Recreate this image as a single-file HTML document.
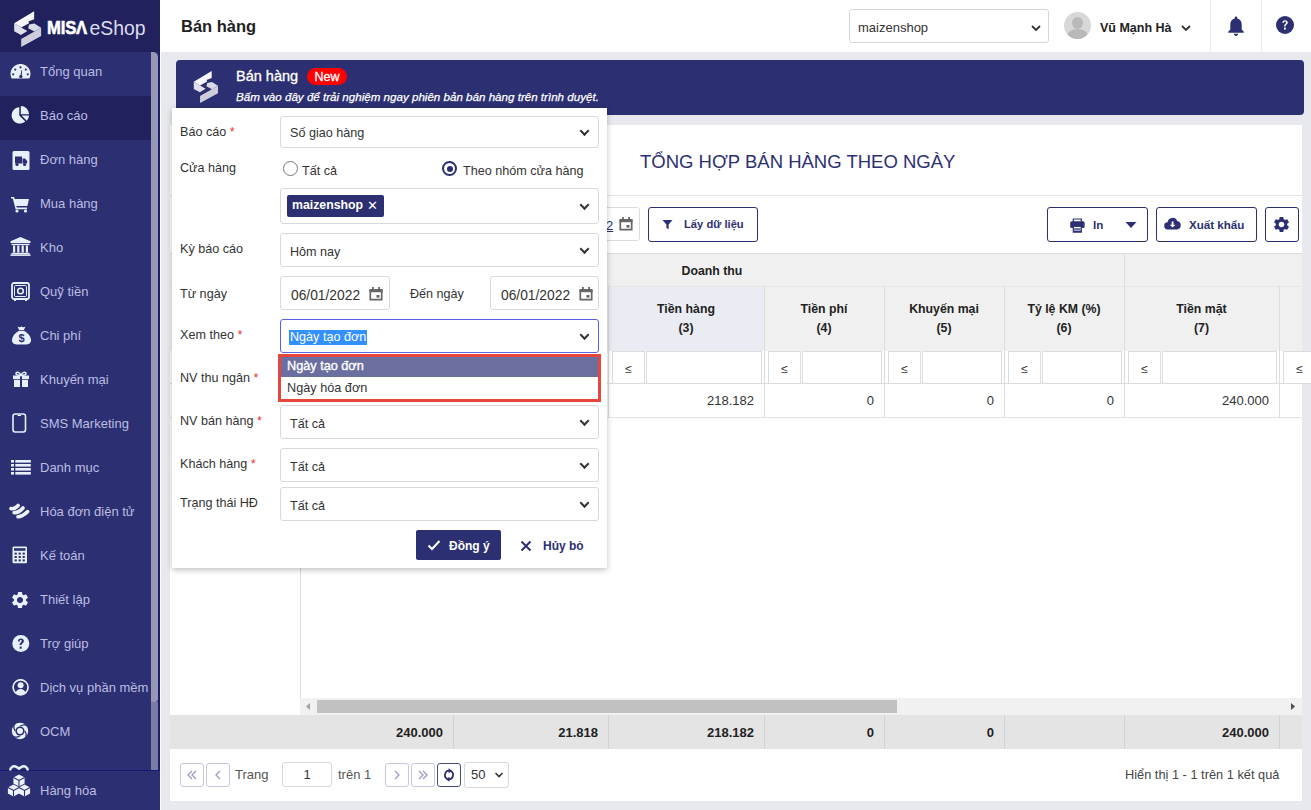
<!DOCTYPE html>
<html><head><meta charset="utf-8">
<style>
*{box-sizing:border-box;margin:0;padding:0}
html,body{width:1311px;height:810px;overflow:hidden;background:#fff;font-family:"Liberation Sans",sans-serif;color:#333}
.abs{position:absolute}
#side{position:absolute;left:0;top:0;width:160px;height:810px;background:#2c2f72}
#logo{position:absolute;left:0;top:0;width:160px;height:52px;background:#20215d}
.mi{position:absolute;left:0;width:151px;height:44px;color:#bbbee2;font-size:13px;line-height:39px;padding-left:40px;white-space:nowrap}
.mi.act{background:#20215d}
.mi svg{position:absolute;left:10px;top:12px;width:20px;height:20px}
#sbar{position:absolute;left:151px;top:52px;width:7px;height:650px;background:#9797b6;border-radius:0 5px 3px 0}
#sbar2{position:absolute;left:151px;top:702px;width:7px;height:68px;background:#7b7ca6}
#strack{position:absolute;left:158px;top:52px;width:2px;height:718px;background:#1d1e6c}
#bottomitem{position:absolute;left:0;top:770px;width:160px;height:40px;background:#2c2f72;border-top:1px solid #1a1670}
#main{position:absolute;left:161px;top:52px;width:1150px;height:758px;background:#e8e9ee;border-top-left-radius:2px}
#hdr-title{position:absolute;left:181px;top:16.5px;font-size:16.5px;font-weight:bold;color:#1f1f1f}
.btn{border:1px solid #2c2f72;border-radius:3px;background:#fff}
.btxt{margin-top:1px;font-size:11.6px;font-weight:bold;color:#2c2f72}
.th{font-size:12.3px;font-weight:bold;color:#222;text-align:center;line-height:19px}
.vl{width:1px;background:#dddddd}
.vl2{top:715px;width:1px;height:34px;background:#d2d2d2}
.td{top:393px;font-size:13px;color:#333;text-align:right}
.tf{top:725px;font-size:13px;font-weight:bold;color:#222;text-align:right}
.pb{top:763px;width:24px;height:24px;border:1px solid #c8c9e0;border-radius:3px}
.pb svg{position:absolute;left:0;top:0}
.fle{top:351px;width:33px;height:33px;border:1px solid #dcdcdc;font-size:12px;text-align:center;line-height:34px;color:#333;background:#fff}
.fin{top:351px;height:33px;border:1px solid #dcdcdc;background:#fff}
.lbl{margin-top:1px;font-size:12.6px;color:#333;white-space:nowrap}
.req{color:#e53935}
.sel{width:319px;border:1px solid #d9d9d9;border-radius:3px;background:#fff}
.sel::after{content:"";position:absolute;right:10px;top:50%;width:5px;height:5px;border-right:2px solid #333;border-bottom:2px solid #333;transform:translateY(-65%) rotate(45deg)}
.sel.nochev::after{display:none}
.sv{margin-top:1px;position:absolute;left:9px;font-size:12.6px;color:#333;white-space:nowrap}
</style></head><body>
<div id="side">
  <div id="logo"></div>
  <div class="mi" style="top:52px">Tổng quan</div>
  <div class="mi act" style="top:96px">Báo cáo</div>
  <div class="mi" style="top:140px">Đơn hàng</div>
  <div class="mi" style="top:184px">Mua hàng</div>
  <div class="mi" style="top:228px">Kho</div>
  <div class="mi" style="top:272px">Quỹ tiền</div>
  <div class="mi" style="top:316px">Chi phí</div>
  <div class="mi" style="top:360px">Khuyến mại</div>
  <div class="mi" style="top:404px">SMS Marketing</div>
  <div class="mi" style="top:448px">Danh mục</div>
  <div class="mi" style="top:492px">Hóa đơn điện tử</div>
  <div class="mi" style="top:536px">Kế toán</div>
  <div class="mi" style="top:580px">Thiết lập</div>
  <div class="mi" style="top:624px">Trợ giúp</div>
  <div class="mi" style="top:668px">Dịch vụ phần mềm</div>
  <div class="mi" style="top:712px">OCM</div>
  <div id="strack"></div>
  <div id="sbar2"></div><div id="sbar"></div>
  <div id="bottomitem"><div class="mi" style="top:0;height:39px;line-height:39px">Hàng hóa</div></div>
</div>
<!-- sidebar icons -->
<svg class="abs ic" style="left:10px;top:64px" width="21" height="15" viewBox="0 0 21 15"><path d="M1.6 14.5A10 10 0 1 1 19.4 14.5Z" fill="#e8f0fc"/><circle cx="10.5" cy="3.3" r="1.1" fill="#2c2f72"/><circle cx="5.2" cy="5.6" r="1.1" fill="#2c2f72"/><circle cx="15.8" cy="5.6" r="1.1" fill="#2c2f72"/><circle cx="3.2" cy="10.3" r="1.1" fill="#2c2f72"/><circle cx="17.8" cy="10.3" r="1.1" fill="#2c2f72"/><path d="M10.2 13.3l1.3-7.2 0.6 0.1-0.4 7.2z" fill="#2c2f72"/><circle cx="10.8" cy="12.6" r="1.7" fill="#2c2f72"/></svg>
<svg class="abs ic" style="left:11px;top:105px" width="19" height="19" viewBox="0 0 19 19"><path d="M8.3 2.2v8.3l6 6A8.2 8.2 0 1 1 8.3 2.2z" fill="#e8f0fc"/><path d="M9.8 1v8.2h8.2A8.2 8.2 0 0 0 9.8 1z" fill="#e8f0fc"/><path d="M10.6 10.5h7.4a8 8 0 0 1-2.2 5.2z" fill="#e8f0fc"/></svg>
<svg class="abs ic" style="left:12px;top:151px" width="18" height="20" viewBox="0 0 18 20"><rect x="0.5" y="0" width="17" height="19" rx="1.5" fill="#e8f0fc"/><path d="M3 5.5h7v7H3z M10.5 7.5h2.6l2 2.5v2.5h-4.6z" fill="#2c2f72"/><circle cx="5" cy="13.5" r="1.6" fill="#2c2f72"/><circle cx="12.6" cy="13.5" r="1.6" fill="#2c2f72"/></svg>
<svg class="abs ic" style="left:11px;top:196px" width="19" height="17" viewBox="0 0 19 17"><path d="M0 1h3l0.8 2H18l-1.6 7H5.3l0.5 1.6H16v1.6H4.6L1.8 2.6H0z" fill="#e8f0fc"/><circle cx="6" cy="15" r="1.6" fill="#e8f0fc"/><circle cx="14.5" cy="15" r="1.6" fill="#e8f0fc"/></svg>
<svg class="abs ic" style="left:9.5px;top:237px" width="21" height="19" viewBox="0 0 21 19"><path d="M10.5 0L20.5 4.3V6H0.5V4.3z" fill="#e8f0fc"/><rect x="1.5" y="6.8" width="18" height="1.3" fill="#e8f0fc"/><rect x="3" y="8.5" width="2.2" height="7" fill="#e8f0fc"/><rect x="7.2" y="8.5" width="2.2" height="7" fill="#e8f0fc"/><rect x="11.6" y="8.5" width="2.2" height="7" fill="#e8f0fc"/><rect x="15.8" y="8.5" width="2.2" height="7" fill="#e8f0fc"/><rect x="1.5" y="15.8" width="18" height="1.3" fill="#e8f0fc"/><rect x="0.5" y="17.3" width="20" height="1.6" fill="#e8f0fc"/></svg>
<svg class="abs ic" style="left:10.5px;top:282px" width="19" height="19" viewBox="0 0 19 19"><rect x="1" y="1" width="17" height="16" rx="2" fill="none" stroke="#e8f0fc" stroke-width="1.8"/><rect x="3.5" y="3.5" width="12" height="11" rx="1" fill="none" stroke="#e8f0fc" stroke-width="1"/><circle cx="9.5" cy="9" r="2.8" fill="none" stroke="#e8f0fc" stroke-width="1.6"/><rect x="3" y="17" width="2" height="2" fill="#e8f0fc"/><rect x="14" y="17" width="2" height="2" fill="#e8f0fc"/></svg>
<svg class="abs ic" style="left:10.5px;top:326px" width="21" height="19" viewBox="0 0 21 19"><path d="M6.5 0.5c1.5 1 2.5 1 4 0 1.5 1 2.5 1 4 0l-1.6 3.5H8.1z" fill="#e8f0fc"/><path d="M8 4.8h5c3 1.5 6.5 5 7 9 0.3 2.8-2 4.7-4.5 4.7h-10C3 18.5 0.7 16.6 1 13.8c0.5-4 4-7.5 7-9z" fill="#e8f0fc"/><text x="10.5" y="16" font-family="Liberation Sans" font-size="11" font-weight="bold" text-anchor="middle" fill="#2c2f72">$</text></svg>
<svg class="abs ic" style="left:11.5px;top:371px" width="18" height="16" viewBox="0 0 18 16"><path d="M1 4.5h16v3.5H1z M2 8.8h14V16H2z" fill="#e8f0fc"/><rect x="8" y="4.5" width="2" height="11.5" fill="#2c2f72"/><path d="M9 4.2C7.5 1 4.5 0.5 4 2.3 3.7 3.7 6 4.4 9 4.4 12 4.4 14.3 3.7 14 2.3 13.5 0.5 10.5 1 9 4.2z" fill="none" stroke="#e8f0fc" stroke-width="1.5"/></svg>
<svg class="abs ic" style="left:11.5px;top:412.5px" width="15" height="20" viewBox="0 0 15 20"><rect x="1" y="1" width="12.5" height="18" rx="2.2" fill="none" stroke="#e8f0fc" stroke-width="1.6"/><rect x="5.5" y="2" width="3.5" height="1" fill="#e8f0fc"/></svg>
<svg class="abs ic" style="left:10.5px;top:460px" width="20" height="15" viewBox="0 0 20 15"><rect x="0" y="0" width="3" height="2.6" fill="#e8f0fc"/><rect x="4.3" y="0" width="15.5" height="2.6" fill="#e8f0fc"/><rect x="0" y="4" width="3" height="2.6" fill="#e8f0fc"/><rect x="4.3" y="4" width="15.5" height="2.6" fill="#e8f0fc"/><rect x="0" y="8" width="3" height="2.6" fill="#e8f0fc"/><rect x="4.3" y="8" width="15.5" height="2.6" fill="#e8f0fc"/><rect x="0" y="12" width="3" height="2.6" fill="#e8f0fc"/><rect x="4.3" y="12" width="15.5" height="2.6" fill="#e8f0fc"/></svg>
<svg class="abs ic" style="left:5px;top:495px" width="30" height="30" viewBox="0 0 30 30"><g fill="none" stroke="#eef4ff" stroke-width="3.6" stroke-linecap="round"><path d="M6 13.6Q9.5 14.5 13.2 10.5"/><path d="M9.2 17.6Q13.5 18 18 13"/><path d="M13 21.8Q17.5 21.5 22.6 16.6"/></g></svg>
<svg class="abs ic" style="left:11.5px;top:546px" width="16" height="18" viewBox="0 0 16 18"><rect x="0.5" y="0.5" width="14.5" height="16.8" rx="1.2" fill="#e8f0fc"/><rect x="2" y="2.2" width="11.5" height="2.6" fill="#2c2f72"/><g fill="#2c2f72"><rect x="2.6" y="6.6" width="2.2" height="2"/><rect x="6.6" y="6.6" width="2.2" height="2"/><rect x="10.6" y="6.6" width="2.2" height="2"/><rect x="2.6" y="10" width="2.2" height="2"/><rect x="6.6" y="10" width="2.2" height="2"/><rect x="10.6" y="10" width="2.2" height="2"/><rect x="2.6" y="13.4" width="2.2" height="2"/><rect x="6.6" y="13.4" width="2.2" height="2"/><rect x="10.6" y="13.4" width="2.2" height="2"/></g></svg>
<svg class="abs ic" style="left:11px;top:590.5px" width="18" height="18" viewBox="0 0 24 24"><path d="M19.14 12.94c.04-.3.06-.61.06-.94 0-.32-.02-.64-.07-.94l2.03-1.58a.49.49 0 0 0 .12-.61l-1.92-3.32a.488.488 0 0 0-.59-.22l-2.39.96c-.5-.38-1.03-.7-1.62-.94l-.36-2.54a.484.484 0 0 0-.48-.41h-3.84c-.24 0-.43.17-.47.41l-.36 2.54c-.59.24-1.13.57-1.62.94l-2.39-.96c-.22-.08-.47 0-.59.22L2.74 8.87c-.12.21-.08.47.12.61l2.03 1.58c-.05.3-.09.63-.09.94s.02.64.07.94l-2.03 1.58a.49.49 0 0 0-.12.61l1.92 3.32c.12.22.37.29.59.22l2.390-.96c.5.38 1.03.7 1.62.94l.36 2.54c.05.24.24.41.48.41h3.84c.24 0 .44-.17.47-.41l.36-2.54c.59-.24 1.13-.56 1.62-.94l2.39.96c.22.08.47 0 .59-.22l1.920-3.32c.12-.22.07-.47-.12-.61l-2.01-1.58zM12 15.6c-1.98 0-3.6-1.62-3.6-3.6s1.62-3.6 3.6-3.6 3.6 1.62 3.6 3.6-1.62 3.6-3.6 3.6z" fill="#e8f0fc" transform="translate(12 12) scale(1.12) translate(-12 -12)"/></svg>
<svg class="abs ic" style="left:11.5px;top:634.5px" width="18" height="18" viewBox="0 0 18 18"><circle cx="8.8" cy="8.6" r="8.5" fill="#e8f0fc"/><path d="M5.9 6.4c0-1.8 1.3-2.9 3-2.9 1.8 0 3 1.1 3 2.5 0 1.2-.7 1.8-1.5 2.4-.6.4-.8.7-.8 1.4v.3H7.6v-.5c0-1.1.4-1.7 1.2-2.2.6-.4.9-.7.9-1.3 0-.6-.4-1-1-1s-1.1.4-1.1 1.3z" fill="#2c2f72"/><rect x="7.6" y="11.6" width="2.1" height="2.1" fill="#2c2f72"/></svg>
<svg class="abs ic" style="left:11.5px;top:678.5px" width="18" height="17" viewBox="0 0 18 17"><circle cx="8.6" cy="8.3" r="7.5" fill="none" stroke="#e8f0fc" stroke-width="1.7"/><circle cx="8.6" cy="6.3" r="3" fill="#e8f0fc"/><path d="M3.6 13.6c1-2.3 2.8-3.5 5-3.5s4 1.2 5 3.5c-1.3 1.3-3 2-5 2s-3.7-.7-5-2z" fill="#e8f0fc"/></svg>
<svg class="abs ic" style="left:11px;top:721.5px" width="18" height="18" viewBox="0 0 18 18"><circle cx="9" cy="9" r="8.2" fill="#eef4ff"/><circle cx="9" cy="9" r="4.6" fill="#2c2f72"/><circle cx="9" cy="9" r="3" fill="#eef4ff"/><g fill="none" stroke="#2c2f72" stroke-width="1.3"><path d="M9 4.2Q13 1.5 16.8 4"/><path d="M13.8 9Q16.5 13 14 16.8"/><path d="M9 13.8Q5 16.5 1.2 14"/><path d="M4.2 9Q1.5 5 4 1.2"/></g></svg>
<svg class="abs ic" style="left:9px;top:764px" width="20" height="7" viewBox="0 0 20 7"><path d="M1 6.5C2 3 4.5 2 6.5 2.5c1.5.4 2.5 1.2 3.5 2.2 1-1 2-1.8 3.5-2.2 2-.5 4.5.5 5.5 4" fill="none" stroke="#e8f0fc" stroke-width="2.4"/></svg>
<svg class="abs ic" style="left:7px;top:773px" width="24" height="25" viewBox="0 0 24 25"><path d="M17.5 11.5L23.1 14.5V20.5L17.5 23.5L11.9 20.5V14.5Z" fill="#eef4ff"/><path d="M11.9 14.5L17.5 17.5L23.1 14.5M17.5 17.5V23.5" fill="none" stroke="#2c2f72" stroke-width="1.1"/><path d="M6.5 11.5L12.1 14.5V20.5L6.5 23.5L0.9000000000000004 20.5V14.5Z" fill="#eef4ff"/><path d="M0.9000000000000004 14.5L6.5 17.5L12.1 14.5M6.5 17.5V23.5" fill="none" stroke="#2c2f72" stroke-width="1.1"/><path d="M12 1.5L17.6 4.5V10.5L12 13.5L6.4 10.5V4.5Z" fill="#eef4ff"/><path d="M6.4 4.5L12 7.5L17.6 4.5M12 7.5V13.5" fill="none" stroke="#2c2f72" stroke-width="1.1"/></svg>
<!-- logo -->
<svg class="abs" style="left:10px;top:8px" width="40" height="42" viewBox="0 0 771 810">
<path d="M80 295 L465 65 L465 215 L355 258 L368 292 L215 375 Z" fill="#f6f6fb"/>
<path d="M80 295 L215 375 L335 445 L210 520 L80 450 Z" fill="#e0e0ea"/>
<path d="M368 320 L470 300 L600 380 L470 455 L350 390 Z" fill="#dadae6"/>
<path d="M215 600 L600 380 L600 540 L215 750 Z" fill="#cdcddc"/>
</svg>
<div class="abs" style="left:47px;top:17px;font-size:19px;font-weight:bold;color:#fff;-webkit-text-stroke:0.6px #fff;transform:scaleX(0.876);transform-origin:0 0;letter-spacing:-0.2px">MIS<span style="display:inline-block;position:relative">Λ</span></div>
<div class="abs" style="left:89.5px;top:16.5px;font-size:19.4px;color:#dcdcf0;letter-spacing:0">eShop</div>

<div id="main"></div>
<div id="hdr-title">Bán hàng</div>
<!-- header right -->
<div class="abs" style="left:849px;top:9px;width:200px;height:34px;border:1px solid #d6d6d6;border-radius:3px;background:#fff"></div>
<div class="abs" style="left:858px;top:19.5px;font-size:13px;color:#333">maizenshop</div>
<svg class="abs" style="left:1030px;top:24px" width="12" height="8" viewBox="0 0 12 8"><path d="M2 2 L6 6 L10 2" stroke="#333" stroke-width="1.8" fill="none"/></svg>
<div class="abs" style="left:1064px;top:12px;width:27px;height:27px;border-radius:50%;background:#d8d8d8;overflow:hidden">
  <div class="abs" style="left:8px;top:5px;width:11px;height:12px;border-radius:50%;background:#b9b9b9"></div>
  <div class="abs" style="left:3px;top:17px;width:21px;height:14px;border-radius:50% 50% 0 0;background:#b9b9b9"></div>
</div>
<div class="abs" style="left:1100px;top:20.5px;font-size:12.5px;font-weight:bold;color:#222">Vũ Mạnh Hà</div>
<svg class="abs" style="left:1180px;top:24px" width="12" height="8" viewBox="0 0 12 8"><path d="M2 2 L6 6 L10 2" stroke="#333" stroke-width="1.8" fill="none"/></svg>
<div class="abs" style="left:1210px;top:0;width:1px;height:52px;background:#ececec"></div>
<div class="abs" style="left:1261px;top:0;width:1px;height:52px;background:#ececec"></div>
<svg class="abs" style="left:1227px;top:15px" width="18" height="22" viewBox="0 0 18 22"><path d="M9 1.5c-.8 0-1.3.6-1.3 1.3v.6C5 4 3.3 6.4 3.3 9.2v5.3L1.2 16.7v1.1h15.6v-1.1l-2.1-2.2V9.2c0-2.8-1.7-5.2-4.4-5.8v-.6c0-.7-.5-1.3-1.3-1.3zM6.8 18.8c0 1.2 1 2.2 2.2 2.2s2.2-1 2.2-2.2z" fill="#2c2f72"/></svg>
<svg class="abs" style="left:1276px;top:16px" width="18" height="18" viewBox="0 0 18 18"><circle cx="9" cy="9" r="9" fill="#2c2f72"/><path d="M6.3 6.8c0-1.6 1.2-2.6 2.8-2.6 1.6 0 2.7 1 2.7 2.3 0 1.1-.6 1.6-1.4 2.2-.6.4-.8.7-.8 1.4v.4H8.1v-.5c0-1 .3-1.5 1.1-2.1.6-.4.9-.7.9-1.3 0-.6-.4-1-1-1s-1.1.4-1.1 1.2z" fill="#fff"/><rect x="8" y="11.6" width="1.9" height="1.9" fill="#fff"/></svg>

<!-- banner -->
<div class="abs" style="left:176px;top:60px;width:1128px;height:55px;background:#2c2f72;border-radius:4px"></div>
<svg class="abs" style="left:190px;top:68px" width="36" height="37.7" viewBox="0 0 771 810"><path d="M80 295 L465 65 L465 215 L355 258 L368 292 L215 375 Z" fill="#f6f6fb"/>
<path d="M80 295 L215 375 L335 445 L210 520 L80 450 Z" fill="#e0e0ea"/>
<path d="M368 320 L470 300 L600 380 L470 455 L350 390 Z" fill="#dadae6"/>
<path d="M215 600 L600 380 L600 540 L215 750 Z" fill="#cdcddc"/></svg>
<div class="abs" style="left:236px;top:68px;font-size:14.5px;color:#fff;-webkit-text-stroke:0.3px #fff">Bán hàng</div>
<div class="abs" style="left:307px;top:68px;width:40px;height:17px;border-radius:9px;background:#f00;color:#fff;font-size:12.5px;font-weight:normal;-webkit-text-stroke:0.3px #fff;text-align:center;line-height:19px">New</div>
<div class="abs" style="left:236px;top:90px;font-size:11.6px;font-style:italic;color:#fff;-webkit-text-stroke:0.25px #fff">Bấm vào đây để trải nghiệm ngay phiên bản bán hàng trên trình duyệt.</div>

<!-- card -->
<div class="abs" style="left:170px;top:125px;width:1132px;height:676px;background:#fff"></div>
<div class="abs" style="left:640px;top:151px;font-size:18.5px;color:#2c2f72">TỔNG HỢP BÁN HÀNG THEO NGÀY</div>
<div class="abs" style="left:170px;top:195px;width:1132px;height:1px;background:#e6e6e6"></div>
<!-- toolbar -->
<div class="abs" style="left:520px;top:207px;width:120px;height:34px;border:1px solid #dcdcdc;border-radius:3px"></div>
<div class="abs" style="left:572px;top:218px;font-size:13px;color:#333">2022</div><div class="abs" style="left:606px;top:218px;font-size:13px;color:#2c2f72;text-decoration:underline">2</div>
<svg class="abs" style="left:618.5px;top:217px" width="14" height="14" viewBox="0 0 14 14"><path d="M1.3 3.5h11.4v9.2H1.3z" fill="none" stroke="#666" stroke-width="1.7"/><rect x="0.5" y="2" width="13" height="3.2" fill="#666"/><rect x="3" y="0" width="1.8" height="3" fill="#666"/><rect x="9.2" y="0" width="1.8" height="3" fill="#666"/><rect x="7.5" y="8" width="3" height="2.6" fill="#666"/></svg>
<div class="abs btn" style="left:648px;top:207px;width:110px;height:35px"></div>
<svg class="abs" style="left:662px;top:219px" width="11" height="11" viewBox="0 0 11 11"><path d="M0.5 1h10L6.6 5.5v4.8L4.4 9V5.5z" fill="#2c2f72"/></svg>
<div class="abs btxt" style="left:684px;top:217px;font-size:11.2px">Lấy dữ liệu</div>

<div class="abs btn" style="left:1047px;top:207px;width:101px;height:35px"></div>
<svg class="abs" style="left:1069px;top:218px" width="16" height="16" viewBox="0 0 16 16"><path d="M4.3 4V1h8v3" fill="none" stroke="#2c2f72" stroke-width="1.2"/><rect x="1.2" y="3.2" width="14.4" height="6.8" rx="1.6" fill="#2c2f72"/><rect x="4.3" y="8.3" width="8" height="5.8" fill="#fff" stroke="#2c2f72" stroke-width="1.2"/><rect x="5" y="10.4" width="6.6" height="1.3" fill="#2c2f72"/><rect x="4.3" y="12.6" width="8" height="1.6" fill="#2c2f72"/></svg>
<div class="abs btxt" style="left:1093px;top:217px">In</div>
<svg class="abs" style="left:1125px;top:221px" width="12" height="8" viewBox="0 0 12 8"><path d="M0.5 1h11L6 7z" fill="#2c2f72"/></svg>

<div class="abs btn" style="left:1156px;top:207px;width:101px;height:35px"></div>
<svg class="abs" style="left:1164px;top:217px" width="17" height="13" viewBox="0 0 17 13"><path d="M4 12.5a3.6 3.6 0 0 1-.4-7.2A5 5 0 0 1 13.2 4a4.3 4.3 0 0 1-.2 8.5z" fill="#2c2f72"/><path d="M7.7 4.5h1.8v3.3h2L8.6 10.6 5.7 7.8h2z" fill="#fff"/></svg>
<div class="abs btxt" style="left:1189px;top:217px">Xuất khẩu</div>

<div class="abs btn" style="left:1265px;top:207px;width:34px;height:35px"></div>
<svg class="abs" style="left:1272px;top:215px" width="19" height="19" viewBox="0 0 24 24"><path d="M19.14 12.94c.04-.3.06-.61.06-.94 0-.32-.02-.64-.07-.94l2.03-1.58a.49.49 0 0 0 .12-.61l-1.92-3.32a.488.488 0 0 0-.59-.22l-2.39.96c-.5-.38-1.03-.7-1.62-.94l-.36-2.54a.484.484 0 0 0-.48-.41h-3.84c-.24 0-.43.17-.47.41l-.36 2.54c-.59.24-1.13.57-1.62.94l-2.39-.96c-.22-.08-.47 0-.59.22L2.74 8.87c-.12.21-.08.47.12.61l2.03 1.58c-.05.3-.09.63-.09.94s.02.64.07.94l-2.03 1.58a.49.49 0 0 0-.12.61l1.92 3.32c.12.22.37.29.59.22l2.39-.96c.5.38 1.03.7 1.62.94l.36 2.54c.05.24.24.41.48.41h3.84c.24 0 .44-.17.47-.41l.36-2.54c.59-.24 1.13-.56 1.62-.94l2.39.96c.22.08.47 0 .59-.22l1.92-3.32c.12-.22.07-.47-.12-.61l-2.01-1.58zM12 15.6c-1.98 0-3.6-1.62-3.6-3.6s1.62-3.6 3.6-3.6 3.6 1.62 3.6 3.6-1.62 3.6-3.6 3.6z" fill="#2c2f72"/></svg>

<!-- table header -->
<div class="abs" style="left:170px;top:253px;width:1132px;height:1px;background:#dcdcdc"></div>
<div class="abs" style="left:170px;top:254px;width:1132px;height:97px;background:#f0f0f0"></div>
<div class="abs" style="left:608px;top:287px;width:156px;height:64px;background:#e9edf3"></div>
<div class="abs" style="left:170px;top:286px;width:1132px;height:1px;background:#e6e6e6"></div>
<div class="abs th" style="left:300px;top:262px;width:824px">Doanh thu</div>
<div class="abs" style="left:170px;top:351px;width:1132px;height:33px;background:#fff"></div>
<div class="abs vl" style="left:300px;top:254px;height:163px"></div>
<div class="abs vl" style="left:453px;top:286px;height:131px"></div>
<div class="abs vl" style="left:608px;top:286px;height:131px"></div>
<div class="abs vl" style="left:764px;top:286px;height:131px"></div>
<div class="abs vl" style="left:884px;top:286px;height:131px"></div>
<div class="abs vl" style="left:1004px;top:286px;height:131px"></div>
<div class="abs vl" style="left:1124px;top:254px;height:163px"></div>
<div class="abs vl" style="left:1279px;top:286px;height:131px"></div>
<div class="abs th" style="left:608px;top:300px;width:156px">Tiền hàng<br>(3)</div>
<div class="abs th" style="left:764px;top:300px;width:120px">Tiền phí<br>(4)</div>
<div class="abs th" style="left:884px;top:300px;width:120px">Khuyến mại<br>(5)</div>
<div class="abs th" style="left:1004px;top:300px;width:120px">Tỷ lệ KM (%)<br>(6)</div>
<div class="abs th" style="left:1124px;top:300px;width:155px">Tiền mặt<br>(7)</div>
<!-- filter row -->
<div class="abs" style="left:170px;top:383px;width:1132px;height:1px;background:#dddddd"></div>
<div class="abs fle" style="left:304px">≤</div>
<div class="abs fin" style="left:338px;width:113px"></div>
<div class="abs fle" style="left:457px">≤</div>
<div class="abs fin" style="left:491px;width:115px"></div>
<div class="abs fle" style="left:612px">≤</div>
<div class="abs fin" style="left:646px;width:116px"></div>
<div class="abs fle" style="left:768px">≤</div>
<div class="abs fin" style="left:802px;width:80px"></div>
<div class="abs fle" style="left:888px">≤</div>
<div class="abs fin" style="left:922px;width:80px"></div>
<div class="abs fle" style="left:1008px">≤</div>
<div class="abs fin" style="left:1042px;width:80px"></div>
<div class="abs fle" style="left:1128px">≤</div>
<div class="abs fin" style="left:1162px;width:115px"></div>
<div class="abs fle" style="left:1283px">≤</div>
<div class="abs fin" style="left:1317px;width:0px"></div>
<div class="abs vl" style="left:300px;top:351px;height:66px"></div>
<!-- data row -->
<div class="abs" style="left:170px;top:417px;width:1132px;height:1px;background:#e3e3e3"></div>
<div class="abs td" style="left:608px;width:146px">218.182</div>
<div class="abs td" style="left:764px;width:110px">0</div>
<div class="abs td" style="left:884px;width:110px">0</div>
<div class="abs td" style="left:1004px;width:110px">0</div>
<div class="abs td" style="left:1124px;width:145px">240.000</div>
<!-- body left line -->
<div class="abs vl" style="left:300px;top:417px;height:298px"></div>
<!-- scrollbar -->
<div class="abs" style="left:300px;top:698px;width:1002px;height:17px;background:#f1f1f1"></div>
<div class="abs" style="left:317px;top:700px;width:580px;height:13px;background:#c1c1c1"></div>
<svg class="abs" style="left:304px;top:702px" width="8" height="9" viewBox="0 0 8 9"><path d="M6 1v7L2 4.5z" fill="#a3a3a3"/></svg>
<svg class="abs" style="left:1289px;top:702px" width="8" height="9" viewBox="0 0 8 9"><path d="M2 1v7l4-3.5z" fill="#505050"/></svg>
<!-- footer -->
<div class="abs" style="left:170px;top:715px;width:1132px;height:34px;background:#e4e4e4"></div>
<div class="abs vl2" style="left:453px"></div>
<div class="abs vl2" style="left:608px"></div>
<div class="abs vl2" style="left:764px"></div>
<div class="abs vl2" style="left:884px"></div>
<div class="abs vl2" style="left:1004px"></div>
<div class="abs vl2" style="left:1124px"></div>
<div class="abs vl2" style="left:1279px"></div>
<div class="abs tf" style="left:300px;width:143px">240.000</div>
<div class="abs tf" style="left:453px;width:145px">21.818</div>
<div class="abs tf" style="left:608px;width:146px">218.182</div>
<div class="abs tf" style="left:764px;width:110px">0</div>
<div class="abs tf" style="left:884px;width:110px">0</div>
<div class="abs tf" style="left:1124px;width:145px">240.000</div>
<!-- pagination -->
<div class="abs pb" style="left:180px"><svg width="22" height="22" viewBox="0 0 22 22"><path d="M11 7l-4 4 4 4M15 7l-4 4 4 4" stroke="#9a9cc6" stroke-width="1.3" fill="none"/></svg></div>
<div class="abs pb" style="left:206px"><svg width="22" height="22" viewBox="0 0 22 22"><path d="M13 7l-4 4 4 4" stroke="#9a9cc6" stroke-width="1.3" fill="none"/></svg></div>
<div class="abs" style="left:235px;top:767px;font-size:13px;color:#555">Trang</div>
<div class="abs" style="left:282px;top:762px;width:50px;height:25px;border:1px solid #d8d8d8;border-radius:3px;text-align:center;font-size:13px;line-height:24px;color:#333">1</div>
<div class="abs" style="left:338px;top:767px;font-size:13px;color:#555">trên 1</div>
<div class="abs pb" style="left:385px"><svg width="22" height="22" viewBox="0 0 22 22"><path d="M9 7l4 4-4 4" stroke="#9a9cc6" stroke-width="1.3" fill="none"/></svg></div>
<div class="abs pb" style="left:411px"><svg width="22" height="22" viewBox="0 0 22 22"><path d="M7 7l4 4-4 4M11 7l4 4-4 4" stroke="#9a9cc6" stroke-width="1.3" fill="none"/></svg></div>
<div class="abs pb" style="left:437px;border-color:#474b8c"><svg width="22" height="22" viewBox="0 0 22 22"><path d="M12 6.8A4.3 4.3 0 0 0 9.6 15M10 15.2A4.3 4.3 0 0 0 12.4 7" stroke="#2c2f72" stroke-width="1.8" fill="none"/><path d="M10.6 4.3L14 6.8 10.6 9.3z M11.4 12.7L8 15.2l3.4 2.5z" fill="#2c2f72"/></svg></div>
<div class="abs" style="left:464px;top:762px;width:45px;height:26px;border:1px solid #d8d8d8;border-radius:3px;font-size:13px;line-height:24px;padding-left:6px;color:#333">50</div>
<svg class="abs" style="left:494px;top:771px" width="10" height="8" viewBox="0 0 10 8"><path d="M1.5 2l3.5 3.5L8.5 2" stroke="#333" stroke-width="1.6" fill="none"/></svg>
<div class="abs" style="left:1125px;top:767px;font-size:12.8px;color:#444">Hiển thị 1 - 1 trên 1 kết quả</div>


<!-- popup -->
<div class="abs" style="left:172px;top:108px;width:435px;height:460px;background:#fff;box-shadow:0 2px 6px rgba(0,0,0,0.25)"></div>
<div class="abs lbl" style="left:180px;top:124px">Báo cáo <span class="req">*</span></div>
<div class="abs sel" style="left:280px;top:116px;height:32px"><span class="sv" style="top:8px">Số giao hàng</span></div>
<div class="abs lbl" style="left:180px;top:160px">Cửa hàng</div>
<div class="abs" style="left:283px;top:161px;width:15px;height:15px;border:1.5px solid #777;border-radius:50%"></div>
<div class="abs lbl" style="left:302px;top:163px">Tất cả</div>
<div class="abs" style="left:442px;top:161px;width:15px;height:15px;border:2px solid #2c2f72;border-radius:50%"><div class="abs" style="left:2.5px;top:2.5px;width:6px;height:6px;border-radius:50%;background:#2c2f72"></div></div>
<div class="abs lbl" style="left:463px;top:163px">Theo nhóm cửa hàng</div>
<div class="abs sel" style="left:280px;top:188px;height:36px"></div>
<div class="abs" style="left:287px;top:195px;width:97px;height:22px;background:#2c2f72;border-radius:2px;color:#fff;font-size:12.3px;font-weight:bold;line-height:21px;padding-left:5px">maizenshop<span style="position:absolute;left:80px;top:0;font-weight:normal;font-size:13px">✕</span></div>
<div class="abs lbl" style="left:180px;top:241px">Kỳ báo cáo</div>
<div class="abs sel" style="left:280px;top:233px;height:34px"><span class="sv" style="top:10px">Hôm nay</span></div>
<div class="abs lbl" style="left:180px;top:286px">Từ ngày</div>
<div class="abs sel nochev" style="left:280px;top:276px;width:110px;height:34px"><span class="sv" style="top:10px;left:10px;font-size:13.8px">06/01/2022</span></div>
<svg class="abs" style="left:368.5px;top:286.5px" width="14" height="14" viewBox="0 0 14 14"><path d="M1.3 3.5h11.4v9.2H1.3z" fill="none" stroke="#666" stroke-width="1.7"/><rect x="0.5" y="2" width="13" height="3.2" fill="#666"/><rect x="3" y="0" width="1.8" height="3" fill="#666"/><rect x="9.2" y="0" width="1.8" height="3" fill="#666"/><rect x="7.5" y="8" width="3" height="2.6" fill="#666"/></svg>
<div class="abs lbl" style="left:410px;top:286px">Đến ngày</div>
<div class="abs sel nochev" style="left:490px;top:276px;width:109px;height:34px"><span class="sv" style="top:10px;left:10px;font-size:13.8px">06/01/2022</span></div>
<svg class="abs" style="left:578.5px;top:286.5px" width="14" height="14" viewBox="0 0 14 14"><path d="M1.3 3.5h11.4v9.2H1.3z" fill="none" stroke="#666" stroke-width="1.7"/><rect x="0.5" y="2" width="13" height="3.2" fill="#666"/><rect x="3" y="0" width="1.8" height="3" fill="#666"/><rect x="9.2" y="0" width="1.8" height="3" fill="#666"/><rect x="7.5" y="8" width="3" height="2.6" fill="#666"/></svg>
<div class="abs lbl" style="left:180px;top:327px">Xem theo <span class="req">*</span></div>
<div class="abs sel" style="left:280px;top:319px;height:34px;border-color:#5b63e0"><span class="sv" style="top:9px;left:8px;background:#3390ff;color:#fff;padding:0 1px;line-height:15px">Ngày tạo đơn</span></div>
<div class="abs lbl" style="left:180px;top:370px">NV thu ngân <span class="req">*</span></div>
<div class="abs lbl" style="left:180px;top:413px">NV bán hàng <span class="req">*</span></div>
<div class="abs sel" style="left:280px;top:405px;height:34px"><span class="sv" style="top:10px">Tất cả</span></div>
<div class="abs lbl" style="left:180px;top:456px">Khách hàng <span class="req">*</span></div>
<div class="abs sel" style="left:280px;top:448px;height:34px"><span class="sv" style="top:10px">Tất cả</span></div>
<div class="abs lbl" style="left:180px;top:495px">Trạng thái HĐ</div>
<div class="abs sel" style="left:280px;top:487px;height:34px"><span class="sv" style="top:10px">Tất cả</span></div>
<!-- dropdown -->
<div class="abs" style="left:278px;top:354px;width:323px;height:48px;border:3px solid #e8453c;background:#fff"></div>
<div class="abs" style="left:281px;top:357px;width:317px;height:20px;background:#6b6fa0"></div>
<div class="abs" style="left:287px;top:358.5px;font-size:12.7px;color:#fff;-webkit-text-stroke:0.35px #fff">Ngày tạo đơn</div>
<div class="abs" style="left:287px;top:381px;font-size:12.7px;color:#333">Ngày hóa đơn</div>
<!-- buttons -->
<div class="abs" style="left:416px;top:530px;width:85px;height:30px;background:#2c2f72;border-radius:2px"></div>
<svg class="abs" style="left:427px;top:539px" width="14" height="12" viewBox="0 0 14 12"><path d="M1.5 6.5l3.5 3.5 7.5-8" stroke="#fff" stroke-width="2" fill="none"/></svg>
<div class="abs" style="left:449px;top:539px;font-size:12px;font-weight:bold;color:#fff">Đồng ý</div>
<svg class="abs" style="left:520px;top:540px" width="12" height="12" viewBox="0 0 12 12"><path d="M1.5 1.5l9 9M10.5 1.5l-9 9" stroke="#2c2f72" stroke-width="2" fill="none"/></svg>
<div class="abs" style="left:543px;top:539px;font-size:12px;font-weight:bold;color:#2c2f72">Hủy bỏ</div>

</body></html>
